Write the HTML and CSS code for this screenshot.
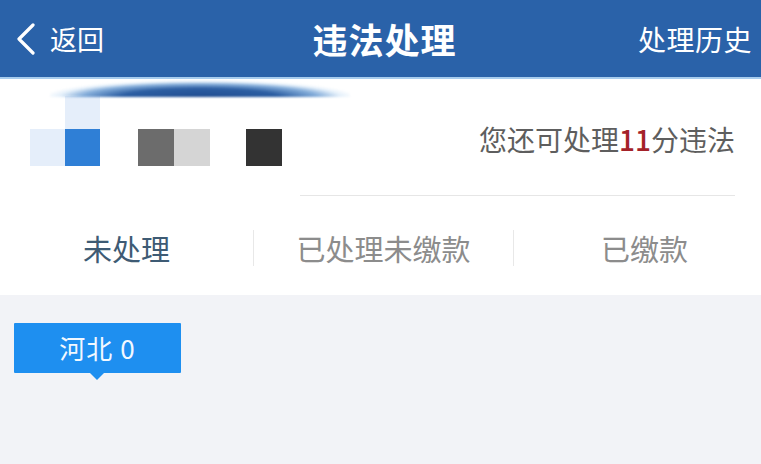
FILE: index.html
```html
<!DOCTYPE html>
<html lang="zh-CN">
<head>
<meta charset="utf-8">
<title>违法处理</title>
<link rel="stylesheet" href="styles.css">
</head>
<body>
<div class="page">
  <header class="header">
    <div class="back">
      <svg class="chev" width="20" height="32" viewBox="0 0 20 32"><path d="M17 2 L3 16 L17 30" fill="none" stroke="#ffffff" stroke-width="3.2" stroke-linecap="round" stroke-linejoin="round"/></svg>
      <span class="back-text">返回</span>
    </div>
    <div class="title">违法处理</div>
    <div class="history">处理历史</div>
  </header>
  <section class="profile">
    <div class="smear"></div>
    <div class="plate">
      <div class="avatar">
        <span class="cell"></span><span class="cell pale"></span>
        <span class="cell pale"></span><span class="cell blue"></span>
      </div>
      <div class="pair first"><span class="sq gray"></span><span class="sq lgray"></span></div>
      <div class="pair second"><span class="sq dark"></span></div>
    </div>
    <div class="points">您还可处理<span class="num">11</span>分违法</div>
  </section>
  <div class="divider-wrap"><div class="divider"></div></div>
  <nav class="tabs">
    <div class="tab active">未处理</div>
    <div class="sep"></div>
    <div class="tab">已处理未缴款</div>
    <div class="sep"></div>
    <div class="tab third">已缴款</div>
  </nav>
  <main class="content">
    <div class="badge">河北 0</div>
  </main>
</div>
</body>
</html>
```

FILE: styles.css
```css
html, body {
  margin: 0;
  padding: 0;
}
body {
  font-family: "Noto Sans CJK SC", "Noto Sans", sans-serif;
  background: #f2f3f7;
}
.page {
  width: 761px;
  height: 464px;
  overflow: hidden;
  background: #f2f3f7;
}
.header {
  height: 77px;
  background: #2a62a9;
  border-bottom: 2px solid #a8cdee;
  display: grid;
  grid-template-columns: 1fr auto 1fr;
  align-items: center;
  color: #ffffff;
}
.back {
  display: flex;
  align-items: center;
  padding-left: 16px;
}
.chev {
  display: block;
}
.back-text {
  font-size: 27px;
  margin-left: 14px;
  line-height: 1;
}
.title {
  font-size: 35px;
  font-weight: 700;
  line-height: 1;
  padding-left: 8px;
  letter-spacing: 1px;
}
.history {
  justify-self: end;
  font-size: 28px;
  line-height: 1;
  padding-right: 9px;
  letter-spacing: 0.5px;
}
.profile {
  position: relative;
  background: #ffffff;
  height: 116px;
  display: flex;
  justify-content: space-between;
  padding: 0 26px 0 30px;
}
.smear {
  position: absolute;
  left: 50px;
  top: 1px;
  width: 300px;
  height: 17px;
  background: radial-gradient(ellipse 52% 100% at 50% 100%, rgba(34,78,145,1) 0%, rgba(44,94,162,1) 50%, rgba(90,145,205,0.75) 75%, rgba(180,212,242,0.35) 90%, rgba(255,255,255,0) 100%);
  filter: blur(1px);
}
.plate {
  display: flex;
  align-items: flex-end;
  padding-top: 17px;
  height: 70px;
}
.avatar {
  display: grid;
  grid-template-columns: 35px 35px;
  grid-template-rows: 33px 37px;
}
.cell {
  display: block;
}
.cell.pale {
  background: #e5eefa;
}
.cell.blue {
  background: #2f7fd6;
}
.pair {
  display: flex;
  height: 37px;
}
.pair.first {
  margin-left: 38px;
}
.pair.second {
  margin-left: 36px;
}
.sq {
  display: block;
  width: 36px;
  height: 37px;
}
.sq.gray { background: #6c6c6c; }
.sq.lgray { background: #d5d5d5; }
.sq.dark { background: #333333; }
.points {
  align-self: flex-start;
  margin-top: 42px;
  font-size: 28px;
  line-height: 36px;
  color: #5e5e5e;
}
.num {
  color: #a42229;
  font-weight: 500;
}
.divider-wrap {
  background: #ffffff;
  padding: 0 26px 0 300px;
}
.divider {
  height: 1px;
  background: #e6e6e6;
}
.tabs {
  background: #ffffff;
  height: 99px;
  display: grid;
  grid-template-columns: 253px 1px 259px 1px 1fr;
  align-items: center;
}
.tab {
  text-align: center;
  font-size: 29px;
  line-height: 36px;
  color: #8c8c8c;
  padding-top: 4px;
}
.tab.active {
  color: #3e5b74;
}
.tab.third {
  padding-left: 14px;
}
.sep {
  height: 36px;
  background: #e8e8e8;
  margin-top: 4px;
}
.content {
  padding: 28px 0 0 14px;
}
.badge {
  position: relative;
  width: 167px;
  height: 50px;
  background: #1e8ff0;
  color: #f2f8ff;
  font-size: 26px;
  line-height: 50px;
  letter-spacing: 1px;
  text-align: center;
  box-sizing: border-box;
  border-radius: 1px;
}
.badge::after {
  content: "";
  position: absolute;
  left: 76px;
  bottom: -7px;
  width: 0;
  height: 0;
  border-left: 7px solid transparent;
  border-right: 7px solid transparent;
  border-top: 7px solid #1e8ff0;
}
```
